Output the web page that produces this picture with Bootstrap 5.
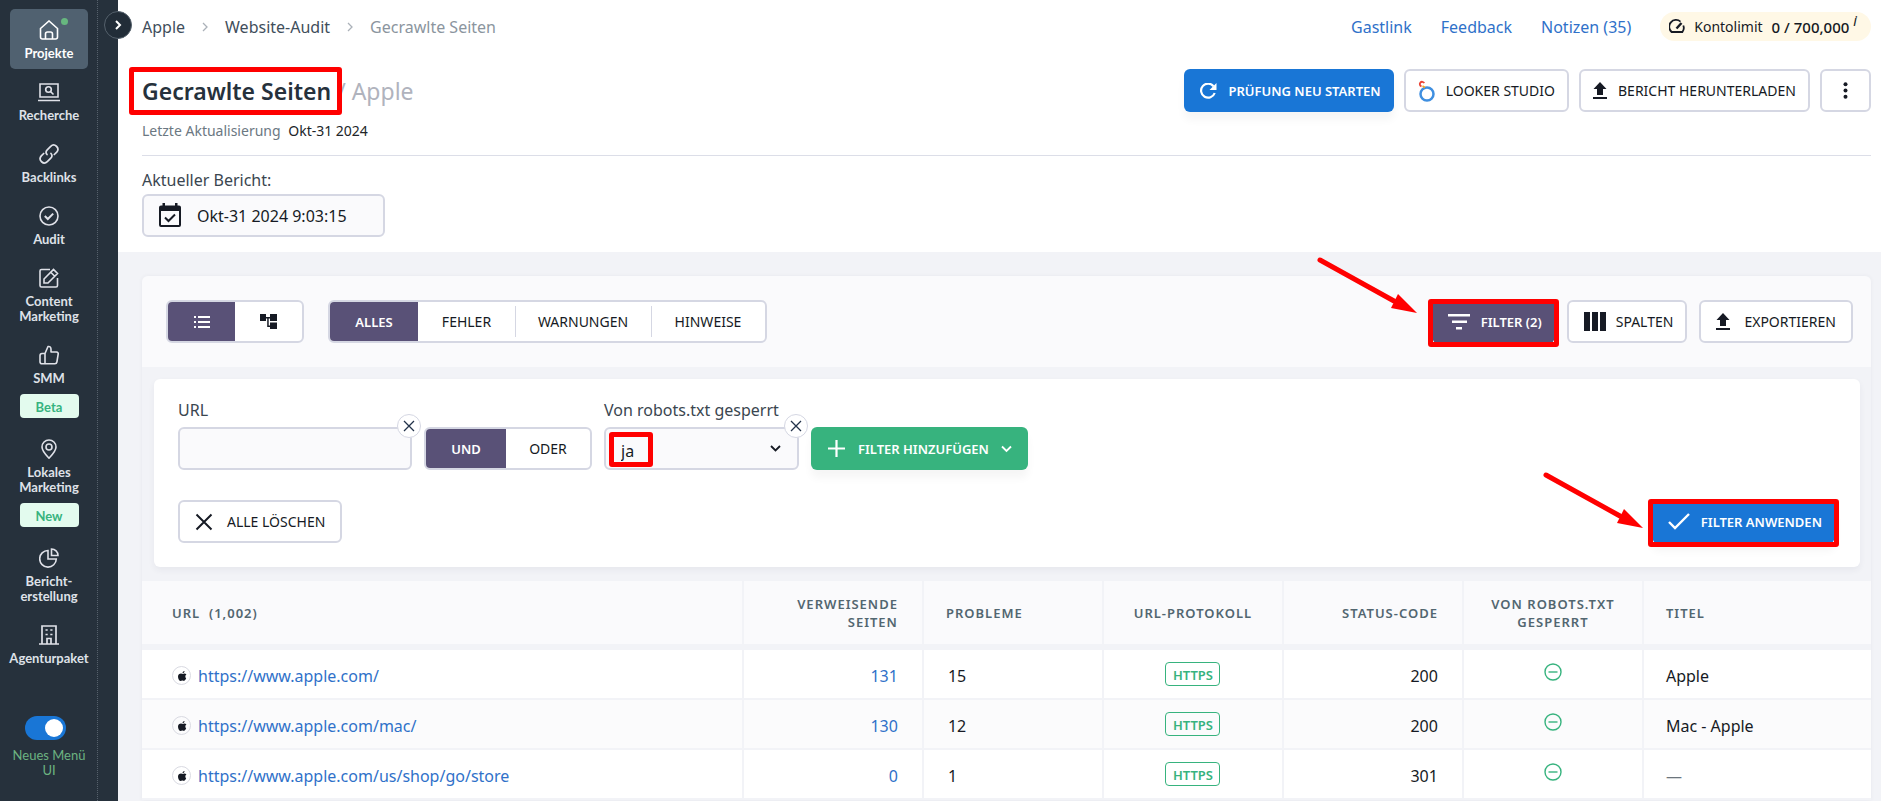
<!DOCTYPE html>
<html lang="de">
<head>
<meta charset="utf-8">
<meta name="viewport" content="width=device-width, initial-scale=1">
<title>Gecrawlte Seiten / Apple</title>
<link href="https://cdn.jsdelivr.net/npm/bootstrap@5.3.0/dist/css/bootstrap.min.css" rel="stylesheet">
<style>
:root{--ink:#161a24;--line:#d5d7e3;--soft:#f2f3f7;--pale:#fafafc;--blue:#1976d6;--link:#2f71c9;--green:#37b37e;--violet:#595177;--slate:#526670}
body{font-family:"Noto Sans","Open Sans",sans-serif;font-size:16px;line-height:22px;color:var(--ink);background:var(--soft)}
a{text-decoration:none;color:var(--link)}
svg{display:block;flex:none}
.side{width:118px;background:#26313c;min-height:100vh}
.side-nav{width:98px;border-right:1px dotted #56616c;padding:9px 9px 0 10px;gap:2px;font-family:Lato,"Noto Sans",sans-serif;font-size:13px;line-height:15px;font-weight:700}
.side-item{color:#dfe1e8;padding:11px 0 8px;border-radius:5px;gap:6px;text-align:center;white-space:nowrap;position:relative}
.side-item.active{background:#506170;color:#fff}
.dot{position:absolute;right:20px;top:9px;width:7px;height:7px;border-radius:50%;background:#67b77f}
.tag{width:59px;height:24px;line-height:26px;border-radius:4px;background:#e3fbee;color:var(--green);margin-top:2px}
.side-toggle{margin-top:40px;color:#6cb381;font-size:13px;font-weight:400;line-height:15px;text-align:center}
.side-toggle .form-check-input{width:41px;height:24px;margin:0 7px 0 0;border:0;background-color:var(--blue);background-size:24px;background-position:right 0 center}
.collapse-btn{position:absolute;left:104px;top:11px;width:28px;height:28px;border-radius:50%;border:1px solid #55616c;background:#222d38;z-index:3}
.top{background:#fff;padding:12px 10px 15px 24px}
.crumbs{gap:17px}
.crumbs a{color:#3f4e5b}.crumbs span{color:#8b959e}
.toplinks{gap:29px}
.pill{background:#fff8e6;border-radius:15px;height:29px;font-size:14px;padding:0 14px 0 9px;gap:9px}
.pill b{font-size:15px;font-weight:500}
.pill sup{font-size:14px;font-style:italic;font-weight:400;margin-left:4px}
.titlebar{margin-top:28px}
.ttl{font-size:23px;line-height:32px;font-weight:600;color:#26313c}
.ttl small{font-size:23px;font-weight:400;color:#b0b3bd}
.acts{gap:10px}
.hl{position:relative}
.hl::after{content:"";position:absolute;border:5px solid red;border-radius:3px;pointer-events:none;inset:-8px -11px -8px -13px}
.hl-btn::after{inset:-1px -4px -4px -4px}
.hl-opt::after{inset:auto auto 3px 5px;width:44px;height:35px}
.ub{height:43px;border:2px solid var(--line);border-radius:6px;background:#fff;color:var(--ink);font-size:14px;font-weight:400;line-height:20px;padding:0 12px;display:flex;align-items:center;gap:11px;white-space:nowrap}
.ub.fill{border:0;color:#fff;font-size:13px;font-weight:600;padding:0 13px 0 16px}
.ub.blue{background:var(--blue);box-shadow:0 8px 8px rgba(0,0,0,.04)}
.ub.green{background:var(--green);box-shadow:0 8px 8px rgba(0,0,0,.04);gap:12px;padding:0 16px}
.ub.dark{background:var(--violet)}
.ub.icon-wide{padding:0 12px 0 15px;gap:10px}
.ub.roomy{padding:0 15px;gap:14px}
.ub.more{padding:0 21px}
.sub{font-size:14px;line-height:20px;margin-top:9px;padding-bottom:14px;border-bottom:1px solid #dcdee8;color:#6b7882}
.fld{height:43px;border:2px solid var(--line);border-radius:6px;background-color:var(--pale);color:var(--ink);font-size:16px}
.report{gap:16px;padding:0 30px 0 15px;min-width:243px}
.lab{margin:13px 0 3px;color:#3a4650}
.panel{margin:24px 10px 0 24px;background:var(--soft);box-shadow:0 0 4px rgba(60,60,90,.06);border-radius:6px 6px 0 0}
.tools{background:var(--pale);padding:24px 18px 24px 24px;border-radius:6px 6px 0 0}
.seg{height:43px;border:2px solid var(--line);border-radius:6px;background:#fff;overflow:hidden}
.seg button{border:0;background:none;padding:0;font-size:14px;font-weight:400;color:var(--ink);display:flex;align-items:center;justify-content:center;position:relative}
.seg button.on{background:var(--violet);color:#fff;font-size:13px;font-weight:600}
.seg .cut::before{content:"";position:absolute;left:0;top:4px;bottom:4px;width:1px;background:var(--line)}
.seg .w-xs{width:67px}.seg .w-s{width:80px}.seg .w-op{width:84px}.seg .w-m{width:88px}.seg .w-l{width:97px}.seg .w-xl{width:114px}.seg .w-xxl{width:136px}
.fbox{margin:12px 11px 14px 12px;padding:20px 25px 24px 24px;background:#fff;border-radius:6px;box-shadow:0 3px 6px rgba(50,50,90,.06)}
.fbox .row-a{gap:12px;margin-bottom:30px}
.fbox label{line-height:22px;margin-bottom:6px;color:#3a4650;display:block;white-space:nowrap}
.f-url{width:234px}.f-rob{width:195px}
.f-rob .form-select{border-width:2px;padding:4px 40px 0 15px;background-size:11px;background-position:right 16px center;background-image:url("data:image/svg+xml,%3csvg xmlns='http://www.w3.org/2000/svg' viewBox='0 0 11 8'%3e%3cpath fill='none' stroke='%23161a24' stroke-width='1.800' d='M1 1l4.500 4.500L10 1'/%3e%3c/svg%3e")}
.rm{position:absolute;right:-9px;top:15px;width:24px;height:24px;border:1px solid var(--line);border-radius:50%;background:#fff;padding:0;display:flex;align-items:center;justify-content:center;color:#22324a;z-index:1}
.arrow{position:absolute;width:104px;height:60px;pointer-events:none;right:calc(100% + 12px);top:-44px}
.arrow.low{right:calc(100% + 6px);top:-29px}
.grid{table-layout:fixed;width:100%;border-collapse:separate;border-spacing:0}
.grid th{height:69px;background:var(--pale);border-bottom:6px solid var(--soft);border-right:2px solid var(--soft);font-size:13px;line-height:18px;font-weight:600;color:var(--slate);padding:0 22px;letter-spacing:1px}
.grid td{height:50px;background:#fff;border-bottom:2px solid var(--soft);border-right:2px solid var(--soft);padding:3px 22px 0;white-space:nowrap}
.grid tr:nth-child(even) td{background:#fbfbfc}
.grid th:first-child,.grid td:first-child{padding-left:30px}
.grid th:last-child,.grid td:last-child{border-right:0}
.grid .n{text-align:right;padding-right:24px}
.grid .c{text-align:center}
.grid .p{padding-left:24px}
.grid .t{padding-top:0}
.col-m{width:180px}.col-t{width:227px}
.urlcell{gap:7px}
.https{display:inline-block;border:1px solid var(--green);color:var(--green);border-radius:4px;font-size:13px;font-weight:600;line-height:24px;height:24px;width:55px;vertical-align:middle}
.fav{width:19px;height:19px;border:1px solid #d9dae2;border-radius:50%;display:flex;align-items:center;justify-content:center}
</style>
</head>
<body>
<svg width="0" height="0" class="position-absolute" aria-hidden="true">
<symbol id="apple" viewBox="0 0 24 24"><path fill="#161a24" d="M18.7 12.7c0-2.400 2-3.600 2.100-3.700-1.200-1.700-3-1.900-3.600-2-1.500-.1-3 .9-3.800.9s-2-.9-3.200-.9C6.800 7.100 4 9.200 4 13.300c0 4 2.800 8.700 5.300 8.700 1.200 0 1.700-.8 3.200-.8s1.900.8 3.200.8c2.200 0 4.300-4.200 4.600-5.300-1-.5-1.600-2.100-1.600-4zM16 5.200c.7-.9 1.200-2 1.100-3.200-1.100.1-2.300.7-3.100 1.600-.6.800-1.200 1.900-1 3.100 1.100.1 2.300-.6 3-1.500z"/></symbol>
<symbol id="minus" viewBox="0 0 18 18"><g fill="none" stroke="#37b37e" stroke-width="1.400"><circle cx="9" cy="9" r="8"/><path d="M4.500 9h9"/></g></symbol>
<symbol id="x" viewBox="0 0 12 12"><path d="M1 1l10 10M11 1L1 11" fill="none" stroke="currentColor" stroke-width="1.300"/></symbol>
<symbol id="up" viewBox="0 0 14 17"><path d="M7 0l6.500 7H10v6H4V7H.5zM0 15h14v2H0z" fill="currentColor"/></symbol>
<symbol id="sep" viewBox="0 0 6 10"><path d="M1 1l4 4-4 4" fill="none" stroke="#abb1b9" stroke-width="1.300"/></symbol>
<symbol id="arr" viewBox="0 0 104 60"><path d="M4 4l74 41" stroke="red" stroke-width="5" stroke-linecap="round"/><path d="M82 38l19 19-26-5z" fill="red"/></symbol>
</svg>
<div class="d-flex position-relative">
<aside class="side flex-shrink-0">
<nav class="side-nav d-flex flex-column min-vh-100">
<a href="#" class="side-item active d-flex flex-column align-items-center"><svg width="20" height="20" viewBox="0 0 20 20" fill="none" stroke="currentColor" stroke-width="1.600"><path d="M1.500 8.500L10 1l8.500 7.500V17q0 2-2 2h-13q-2 0-2-2zM6.500 19v-5q0-2 2-2h3q2 0 2 2v5"/></svg>Projekte<i class="dot"></i></a>
<a href="#" class="side-item d-flex flex-column align-items-center"><svg width="22" height="20" viewBox="0 0 22 20" fill="none" stroke="currentColor" stroke-width="1.600"><path d="M2 2h18v13H2zM0 18.500h22M12.500 9.500l3 3"/><circle cx="10.500" cy="7.500" r="2.800"/></svg>Recherche</a>
<a href="#" class="side-item d-flex flex-column align-items-center"><svg width="20" height="20" viewBox="0 0 20 20" fill="none" stroke="currentColor" stroke-width="1.700" stroke-linecap="round"><path d="M8 10.500c-1.300-1.500-1-3.400.2-4.600l3.500-3.500c3.700-3.700 9.600 1.400 6 5.700l-2.400 2.400M12 9.500c1.300 1.500 1 3.400-.2 4.600l-3.500 3.500c-3.700 3.700-9.600-1.400-6-5.700l2.400-2.400"/></svg>Backlinks</a>
<a href="#" class="side-item d-flex flex-column align-items-center"><svg width="20" height="20" viewBox="0 0 20 20" fill="none" stroke="currentColor" stroke-width="1.600"><circle cx="10" cy="10" r="9"/><path d="M5.800 10l3 3 5.400-5.400" stroke-width="2"/></svg>Audit</a>
<a href="#" class="side-item d-flex flex-column align-items-center"><svg width="20" height="20" viewBox="0 0 20 20" fill="none" stroke="currentColor" stroke-width="1.600"><path d="M11 1.500H2.500q-1.500 0-1.500 1.500v14.500q0 1.500 1.500 1.500H17q1.500 0 1.500-1.500V10M5 15v-4L14.500 1.500l4 4L9 15zM12 4.500l3.500 3.500"/></svg><span>Content<br>Marketing</span></a>
<a href="#" class="side-item d-flex flex-column align-items-center"><svg width="20" height="20" viewBox="0 0 20 20" fill="none" stroke="currentColor" stroke-width="1.600" stroke-linejoin="round"><path d="M6 8.500L9 1.500q3-.5 3 3V7h5.500q2 .3 1.700 2l-1.300 8q-.3 1.800-2 1.800H3q-2 0-2-2v-6q0-2.300 2-2.300h3v10"/></svg>SMM<span class="tag">Beta</span></a>
<a href="#" class="side-item d-flex flex-column align-items-center"><svg width="20" height="20" viewBox="0 0 20 20" fill="none" stroke="currentColor" stroke-width="1.600"><path d="M10 19.200C6 15 3 12 3 8a7 7 0 0 1 14 0c0 4-3 7-7 11.200z"/><circle cx="10" cy="8" r="3"/></svg><span>Lokales<br>Marketing</span><span class="tag">New</span></a>
<a href="#" class="side-item d-flex flex-column align-items-center"><svg width="20" height="20" viewBox="0 0 20 20" fill="none" stroke="currentColor" stroke-width="1.600"><path d="M9 2.500A8.300 8.300 0 1 0 17.300 11H9zM12.500 1v6.500H19A6.500 6.500 0 0 0 12.500 1z"/></svg><span>Bericht-<br>erstellung</span></a>
<a href="#" class="side-item d-flex flex-column align-items-center"><svg width="20" height="20" viewBox="0 0 20 20" fill="none" stroke="currentColor" stroke-width="1.700"><path d="M3 19V1h14v18M0 19h20M8 19v-5.500h4V19M6.500 5h2.200M11.300 5h2.200M6.500 9.500h2.200M11.300 9.500h2.200"/></svg>Agenturpaket</a>
<div class="side-toggle form-switch p-0"><input class="form-check-input float-none" type="checkbox" role="switch" id="menu" checked><label class="d-block mt-2" for="menu">Neues Menü<br>UI</label></div>
</nav>
</aside>
<button class="collapse-btn p-0 d-flex align-items-center justify-content-center" aria-label="Menü ausklappen"><svg width="8" height="10" viewBox="0 0 8 10"><path d="M2 1l4 4-4 4" fill="none" stroke="#fff" stroke-width="2"/></svg></button>
<main class="flex-grow-1">
<header class="top">
<div class="d-flex justify-content-between align-items-center">
<nav class="crumbs d-flex align-items-center" aria-label="Brotkrumen"><a href="#">Apple</a><svg width="6" height="10"><use href="#sep"/></svg><a href="#">Website-Audit</a><svg width="6" height="10"><use href="#sep"/></svg><span>Gecrawlte Seiten</span></nav>
<div class="toplinks d-flex align-items-center"><a href="#">Gastlink</a><a href="#">Feedback</a><a href="#">Notizen (35)</a>
<div class="pill d-flex align-items-center"><svg width="16" height="15" viewBox="0 0 16 15" fill="none" stroke="#161a24" stroke-width="1.800"><path d="M11.500 2.600A6.600 6.600 0 0 0 2.600 13h10.800a6.600 6.600 0 0 0 .9-6.500"/><path d="M7.500 9.500L12.500 4" stroke-width="2.400"/></svg><span>Kontolimit</span><b>0 / 700,000<sup>i</sup></b></div></div>
</div>
<div class="titlebar d-flex justify-content-between align-items-center">
<h1 class="ttl m-0"><span class="hl">Gecrawlte Seiten</span> <small>/ Apple</small></h1>
<div class="acts d-flex">
<button class="ub fill blue"><svg width="17" height="16" viewBox="0 0 17 16"><path d="M13.500 3.200A7 7 0 1 0 14.700 10" fill="none" stroke="#fff" stroke-width="2.200"/><path d="M16.500 0v7h-7z" fill="#fff"/></svg>PRÜFUNG NEU STARTEN</button>
<button class="ub"><svg width="17" height="22" viewBox="0 0 17 22" fill="none"><circle cx="9" cy="14" r="6.500" stroke="#3f8fe0" stroke-width="2.500"/><path d="M3.500 6.300A2.300 2.300 0 1 1 6.200 3.200" stroke="#ea4335" stroke-width="1.800"/><path d="M4.500 6l2.500 1.500" stroke="#f5a623" stroke-width="1.500"/></svg>LOOKER STUDIO</button>
<button class="ub"><svg width="14" height="17"><use href="#up"/></svg>BERICHT HERUNTERLADEN</button>
<button class="ub more" aria-label="Mehr"><svg width="5" height="17" viewBox="0 0 5 17" fill="#161a24"><circle cx="2.500" cy="2.300" r="2"/><circle cx="2.500" cy="8.500" r="2"/><circle cx="2.500" cy="14.700" r="2"/></svg></button>
</div>
</div>
<div class="sub">Letzte Aktualisierung <span class="text-dark ms-1">Okt-31 2024</span></div>
<div class="lab">Aktueller Bericht:</div>
<button class="fld report d-flex align-items-center"><svg width="22" height="25" viewBox="0 0 22 25"><path fill="#161a24" d="M3.500 0h2.500v2.500h10V0h2.500v2.500H20q2 0 2 2V22q0 2-2 2H2q-2 0-2-2V4.500q0-2 2-2h1.500zM2 8v14h18V8z"/><path d="M6 14.500l3.500 3.500 6.500-6.500" fill="none" stroke="#161a24" stroke-width="2"/></svg>Okt-31 2024 9:03:15</button>
</header>
<section class="panel">
<div class="tools d-flex justify-content-between">
<div class="d-flex gap-4">
<div class="seg d-flex"><button class="on w-xs" aria-label="Liste"><svg width="16" height="12" viewBox="0 0 16 12" fill="#fff"><path d="M0 0h2v2H0zM0 5h2v2H0zM0 10h2v2H0zM4 0h12v2H4zM4 5h12v2H4zM4 10h12v2H4z"/></svg></button><button class="w-xs" aria-label="Baum"><svg width="17" height="15" viewBox="0 0 17 15" fill="#161a24"><path d="M0 0h6v7H0zM10 0h7v7h-7zM10 8.500h7V15h-7zM6 3h4v1.500H8.700v7H10V13H7.200V4.500H6z"/></svg></button></div>
<div class="seg d-flex"><button class="on w-m">ALLES</button><button class="w-l">FEHLER</button><button class="cut w-xxl">WARNUNGEN</button><button class="cut w-xl">HINWEISE</button></div>
</div>
<div class="d-flex gap-2">
<div class="hl hl-btn me-1"><button class="ub fill dark"><svg width="22" height="16" viewBox="0 0 22 16" fill="#fff"><path d="M0 0h22v2.500H0zM4 6.500h15V9H4zM8 13h6v2.500H8z"/></svg>FILTER (2)</button><svg class="arrow"><use href="#arr"/></svg></div>
<button class="ub icon-wide me-1"><svg width="22" height="19" viewBox="0 0 22 19" fill="#161a24"><path d="M0 0h6v19H0zM8 0h6v19H8zM16 0h6v19h-6z"/></svg>SPALTEN</button>
<button class="ub roomy"><svg width="14" height="17"><use href="#up"/></svg>EXPORTIEREN</button>
</div>
</div>
<form class="fbox" onsubmit="return false">
<div class="row-a d-flex align-items-end">
<div class="f-url position-relative"><label for="u">URL</label><input id="u" type="text" class="fld form-control"><button type="button" class="rm" aria-label="Entfernen"><svg width="12" height="12"><use href="#x"/></svg></button></div>
<div class="seg d-flex"><button type="button" class="on w-s">UND</button><button type="button" class="w-op">ODER</button></div>
<div class="f-rob hl hl-opt"><label for="r">Von robots.txt gesperrt</label><select id="r" class="fld form-select"><option>ja</option></select><button type="button" class="rm" aria-label="Entfernen"><svg width="12" height="12"><use href="#x"/></svg></button></div>
<button type="button" class="ub fill green"><svg width="19" height="19" viewBox="0 0 19 19"><path d="M9.500 1v17M1 9.500h17" stroke="#fff" stroke-width="2.200"/></svg>FILTER HINZUFÜGEN<svg width="11" height="8" viewBox="0 0 11 8"><path d="M1 1.500L5.500 6 10 1.500" fill="none" stroke="#fff" stroke-width="1.800"/></svg></button>
</div>
<div class="d-flex justify-content-between">
<button type="button" class="ub roomy"><svg width="18" height="18"><use href="#x"/></svg>ALLE LÖSCHEN</button>
<div class="hl hl-btn"><button type="submit" class="ub fill blue"><svg width="22" height="17" viewBox="0 0 22 17"><path d="M1 9l6 6L21 1" fill="none" stroke="#fff" stroke-width="2.400"/></svg>FILTER ANWENDEN</button><svg class="arrow low"><use href="#arr"/></svg></div>
</div>
</form>
<table class="grid">
<colgroup><col><col class="col-m"><col class="col-m"><col class="col-m"><col class="col-m"><col class="col-m"><col class="col-t"></colgroup>
<thead><tr><th>URL &nbsp;(1,002)</th><th class="n">VERWEISENDE SEITEN</th><th>PROBLEME</th><th class="c">URL-PROTOKOLL</th><th class="n">STATUS-CODE</th><th class="c">VON ROBOTS.TXT GESPERRT</th><th>TITEL</th></tr></thead>
<tbody>
<tr><td><div class="urlcell d-flex align-items-center"><span class="fav"><svg width="12" height="12"><use href="#apple"/></svg></span><a href="#">https://www.apple.com/</a></div></td><td class="n"><a href="#">131</a></td><td class="p">15</td><td class="c t"><span class="https">HTTPS</span></td><td class="n">200</td><td class="c t"><svg class="mx-auto mb-1" width="18" height="18"><use href="#minus"/></svg></td><td>Apple</td></tr>
<tr><td><div class="urlcell d-flex align-items-center"><span class="fav"><svg width="12" height="12"><use href="#apple"/></svg></span><a href="#">https://www.apple.com/mac/</a></div></td><td class="n"><a href="#">130</a></td><td class="p">12</td><td class="c t"><span class="https">HTTPS</span></td><td class="n">200</td><td class="c t"><svg class="mx-auto mb-1" width="18" height="18"><use href="#minus"/></svg></td><td>Mac - Apple</td></tr>
<tr><td><div class="urlcell d-flex align-items-center"><span class="fav"><svg width="12" height="12"><use href="#apple"/></svg></span><a href="#">https://www.apple.com/us/shop/go/store</a></div></td><td class="n"><a href="#">0</a></td><td class="p">1</td><td class="c t"><span class="https">HTTPS</span></td><td class="n">301</td><td class="c t"><svg class="mx-auto mb-1" width="18" height="18"><use href="#minus"/></svg></td><td class="text-secondary">—</td></tr>
</tbody></table>
</section>
</main>
</div>
<script src="https://cdn.jsdelivr.net/npm/bootstrap@5.3.0/dist/js/bootstrap.bundle.min.js"></script>
</body>
</html>
